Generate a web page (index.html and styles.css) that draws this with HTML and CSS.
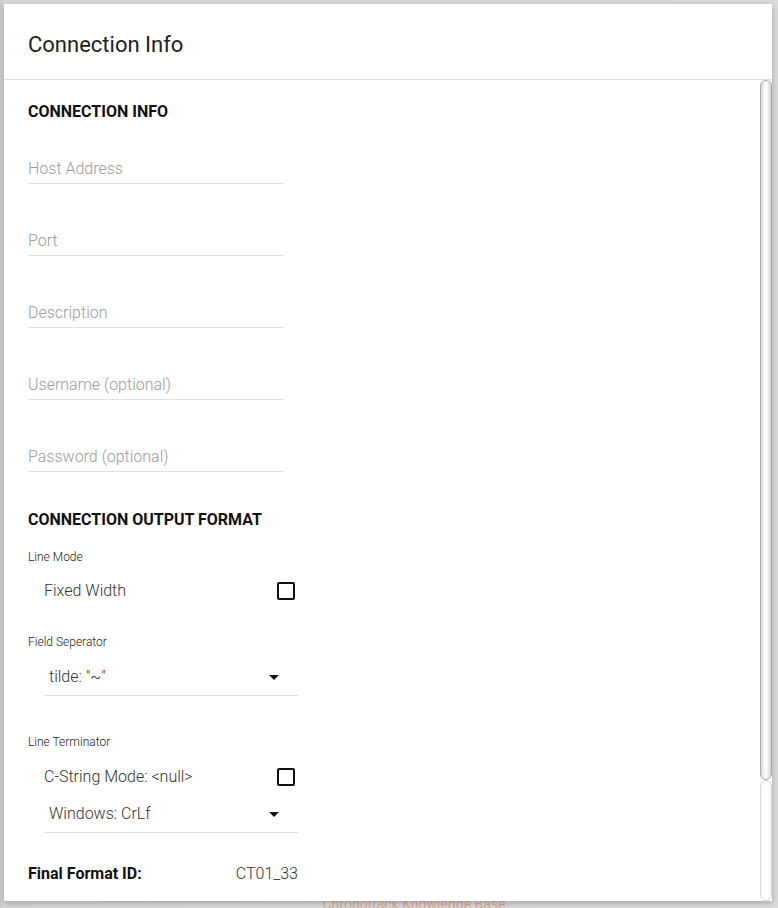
FILE: index.html
```html
<!DOCTYPE html>
<html lang="en">
<head>
<meta charset="utf-8">
<title>Connection Info</title>
<link rel="stylesheet" href="styles.css">
</head>
<body>
<div class="page">
  <div class="dialog">
    <div class="dialog-header">Connection Info</div>
    <div class="dialog-body">
      <div class="content">
        <h2 class="section-title">CONNECTION INFO</h2>
        <div class="fields">
          <div class="field"><input class="text-input" type="text" placeholder="Host Address"></div>
          <div class="field"><input class="text-input" type="text" placeholder="Port"></div>
          <div class="field"><input class="text-input" type="text" placeholder="Description"></div>
          <div class="field"><input class="text-input" type="text" placeholder="Username (optional)"></div>
          <div class="field"><input class="text-input" type="password" placeholder="Password (optional)"></div>
        </div>

        <h2 class="section-title section-title-2">CONNECTION OUTPUT FORMAT</h2>

        <div class="small-label label-line-mode">Line Mode</div>
        <div class="check-row row-fixed">
          <span class="check-text">Fixed Width</span>
          <span class="checkbox"></span>
        </div>

        <div class="small-label label-field-sep">Field Seperator</div>
        <div class="select select-sep">
          <span class="select-value">tilde: "~"</span>
          <span class="select-arrow"></span>
        </div>

        <div class="small-label label-term">Line Terminator</div>
        <div class="check-row row-cstring">
          <span class="check-text">C-String Mode: &lt;null&gt;</span>
          <span class="checkbox"></span>
        </div>
        <div class="select select-term">
          <span class="select-value">Windows: CrLf</span>
          <span class="select-arrow"></span>
        </div>

        <div class="final-row">
          <span class="final-label">Final Format ID:</span>
          <span class="final-value">CT01_33</span>
        </div>
      </div>
      <div class="scrollbar">
        <div class="scroll-thumb"></div>
        <div class="scroll-track"></div>
      </div>
    </div>
  </div>
  <div class="kb-link">Chronotrack Knowledge Base</div>
</div>
</body>
</html>
```

FILE: styles.css
```css
* { box-sizing: border-box; }

html, body {
  margin: 0;
  padding: 0;
  height: 100%;
  overflow: hidden;
}

body {
  background: #d9d9d9;
  font-family: Roboto, "Noto Sans", "Liberation Sans", sans-serif;
  color: #212121;
}

.page {
  display: flex;
  flex-direction: column;
  align-items: flex-start;
  padding: 4px 0 0 4px;
  height: 908px;
  overflow: hidden;
  background: linear-gradient(to right, #c9c9c9 0, #d6d6d6 4px, #dadada 100%);
}

.dialog {
  position: relative;
  z-index: 1;
  flex: none;
  width: 768px;
  height: 897px;
  background: #fff;
  display: flex;
  flex-direction: column;
  box-shadow: 0 2px 6px rgba(0,0,0,0.25);
}

.dialog-header {
  height: 76px;
  padding: 27px 24px 0;
  font-size: 22px;
  line-height: 28px;
  font-weight: 400;
  color: #212121;
  border-bottom: 1px solid #e0e0e0;
  flex: none;
}

.dialog-body {
  position: relative;
  flex: 1;
  overflow: hidden;
}

/* scrollbar overlay on the right edge of the body */
.scrollbar {
  position: absolute;
  top: 0;
  right: 0;
  bottom: 0;
  width: 12px;
  display: flex;
  flex-direction: column;
  background: #fff;
}
.scroll-thumb {
  height: 700px;
  flex: none;
  background: linear-gradient(to right, #dcdcdc, #f6f6f6 35%, #fdfdfd 55%, #e6e6e6 80%, #cfcfcf);
  border: 1px solid #a9a9a9;
  border-radius: 6px;
}
.scroll-track {
  flex: 1;
  background: linear-gradient(to right, #f3f3f3, #fff 40%, #fff 60%, #f3f3f3);
  border: 1px solid #dadada;
  border-radius: 6px;
}

.content {
  padding: 22px 24px 0 24px;
}

.section-title {
  margin: 0;
  font-size: 16px;
  line-height: 20px;
  font-weight: 700;
  color: #111;
}

.fields {
  display: flex;
  flex-direction: column;
  gap: 46px;
  margin-top: 36px;
}

.field { width: 256px; }

.text-input {
  display: block;
  width: 100%;
  height: 26px;
  padding: 0 0 5px 0;
  margin: 0;
  border: none;
  border-bottom: 1px solid #e0e0e0;
  font-family: inherit;
  font-size: 16px;
  font-weight: 300;
  line-height: 20px;
  color: #212121;
  background: transparent;
  outline: none;
}
.text-input::placeholder { color: #9a9a9a; }

.section-title-2 { margin-top: 38px; }

.small-label {
  font-size: 12px;
  font-weight: 300;
  line-height: 14px;
  color: #222;
}
.label-line-mode { margin-top: 20px; }
.label-field-sep { margin-top: 32px; }
.label-term { margin-top: 39px; }

.check-row {
  display: flex;
  align-items: center;
  justify-content: space-between;
  width: 254px;
  height: 24px;
  margin-left: 16px;
  padding-right: 3px;
}
.row-fixed { margin-top: 15px; }
.row-cstring { margin-top: 16px; }

.check-text {
  font-size: 16px;
  font-weight: 300;
  color: #333;
  margin-top: -1px;
}

.checkbox {
  width: 18px;
  height: 18px;
  border: 2px solid #111;
  border-radius: 2px;
}

.select {
  display: flex;
  align-items: center;
  justify-content: space-between;
  width: 254px;
  height: 32px;
  margin-left: 16px;
  padding: 0 19px 7px 5px;
  border-bottom: 1px solid #e0e0e0;
}
.select-sep { margin-top: 15px; }
.select-term { margin-top: 12px; }

.select-value {
  font-size: 16px;
  font-weight: 300;
  line-height: 24px;
  color: #333;
  margin-top: 2px;
}

.select-arrow {
  width: 0;
  height: 0;
  border-left: 5px solid transparent;
  border-right: 5px solid transparent;
  border-top: 5px solid #111;
  margin-top: 2px;
}

.final-row {
  display: flex;
  justify-content: space-between;
  width: 270px;
  margin-top: 31px;
  font-size: 16px;
  line-height: 20px;
}
.final-label { font-weight: 700; color: #111; }
.final-value { font-weight: 300; color: #333; }

.kb-link {
  flex: none;
  align-self: center;
  margin-top: -7px;
  margin-left: 46px;
  font-size: 14px;
  line-height: 20px;
  color: #d6ac96;
}
```
